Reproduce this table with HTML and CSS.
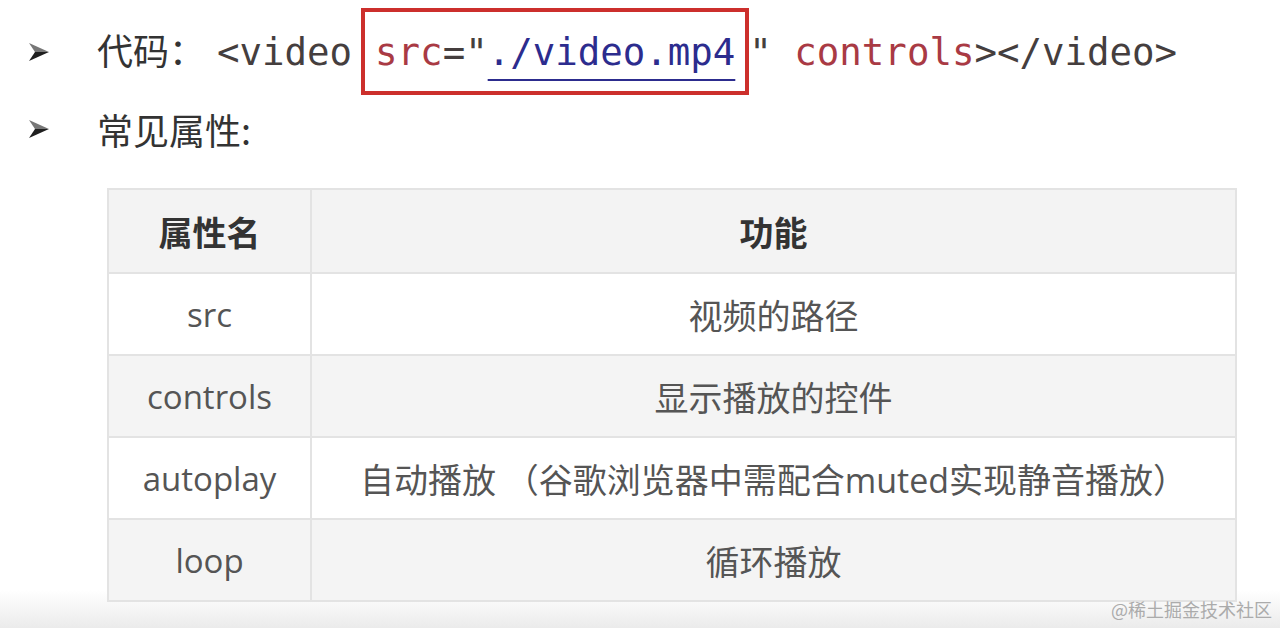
FILE: index.html
```html
<!DOCTYPE html>
<html lang="zh-CN">
<head>
    <meta charset="UTF-8">
    <title>video 标签</title>
    <link rel="stylesheet" href="styles.css">
</head>
<body>
    <div class="slide">
        <div class="point code-line">
            <svg class="bullet" viewBox="0 0 20 20" width="20" height="20">
                <polygon points="0,1 20,10 6,10" fill="#777"/>
                <polygon points="0,19 20,10 6,10" fill="#1f1f1f"/>
            </svg>
            <span class="label">代码：</span>
            <code class="code">&lt;video<span class="mark"><span class="attr">src</span>="<span class="link">./video.mp4</span></span>" <span class="attr">controls</span>&gt;&lt;/video&gt;</code>
        </div>

        <div class="point">
            <svg class="bullet" viewBox="0 0 20 20" width="20" height="20">
                <polygon points="0,1 20,10 6,10" fill="#777"/>
                <polygon points="0,19 20,10 6,10" fill="#1f1f1f"/>
            </svg>
            <span class="label">常见属性:</span>
        </div>

        <table class="attrs">
            <thead>
                <tr>
                    <th class="name">属性名</th>
                    <th>功能</th>
                </tr>
            </thead>
            <tbody>
                <tr>
                    <td class="name">src</td>
                    <td>视频的路径</td>
                </tr>
                <tr>
                    <td class="name">controls</td>
                    <td>显示播放的控件</td>
                </tr>
                <tr>
                    <td class="name">autoplay</td>
                    <td>自动播放 （谷歌浏览器中需配合muted实现静音播放）</td>
                </tr>
                <tr>
                    <td class="name">loop</td>
                    <td>循环播放</td>
                </tr>
            </tbody>
        </table>
    </div>

    <div class="watermark">@稀土掘金技术社区</div>
</body>
</html>
```

FILE: styles.css
```css
html, body {
    height: 100%;
}

body {
    margin: 0;
    font-family: "Open Sans", "Noto Sans CJK SC", sans-serif;
    background: linear-gradient(to bottom, #ffffff 0%, #ffffff 94%, #ebebeb 100%);
    overflow: hidden;
}

.slide {
    padding: 8px 0 0 29px;
}

.point {
    display: flex;
    align-items: center;
    height: 48px;
    margin-top: 10px;
}

.code-line {
    height: 87px;
    margin-top: 0;
    align-items: baseline;
}

.code-line .bullet {
    align-self: center;
}

.bullet {
    flex: none;
    margin-right: 48px;
}

.label {
    font-family: "Noto Sans CJK SC", sans-serif;
    font-size: 36px;
    color: #333;
    white-space: pre;
}

.code {
    font-family: "DejaVu Sans Mono", monospace;
    font-size: 37.4px;
    color: #453e3e;
    margin-left: 12px;
    white-space: pre;
}

.mark {
    display: inline-block;
    border: 4px solid #cc2f2c;
    padding: 18px 10px 17px 10px;
    margin-left: 9px;
}

.attr {
    color: #a93a44;
}

.link {
    color: #2c2c8e;
    text-decoration: underline;
    text-decoration-thickness: 2px;
    text-underline-offset: 14px;
}

.attrs {
    margin: 35px 0 0 78px;
    width: 1130px;
    border-collapse: collapse;
    table-layout: fixed;
    color: #555;
    font-size: 33px;
}

.attrs th, .attrs td {
    border: 2px solid #e3e3e3;
    text-align: center;
    padding: 0;
}

.attrs th {
    height: 82px;
    font-family: "Noto Sans CJK SC", sans-serif;
    font-size: 34px;
    font-weight: 700;
    color: #333;
    background: #f3f3f3;
}

.attrs td {
    height: 80px;
}

.attrs td:not(.name) {
    font-family: "Open Sans", "Noto Sans CJK SC", sans-serif;
    font-size: 34px;
}

.attrs .name {
    width: 201px;
}

.attrs tbody tr:nth-child(odd) td {
    background: #ffffff;
}

.attrs tbody tr:nth-child(even) td {
    background: #f4f4f4;
}

.watermark {
    position: absolute;
    right: 8px;
    bottom: 6px;
    font-family: "Noto Sans CJK SC", sans-serif;
    font-size: 18px;
    color: #ababab;
}
```
